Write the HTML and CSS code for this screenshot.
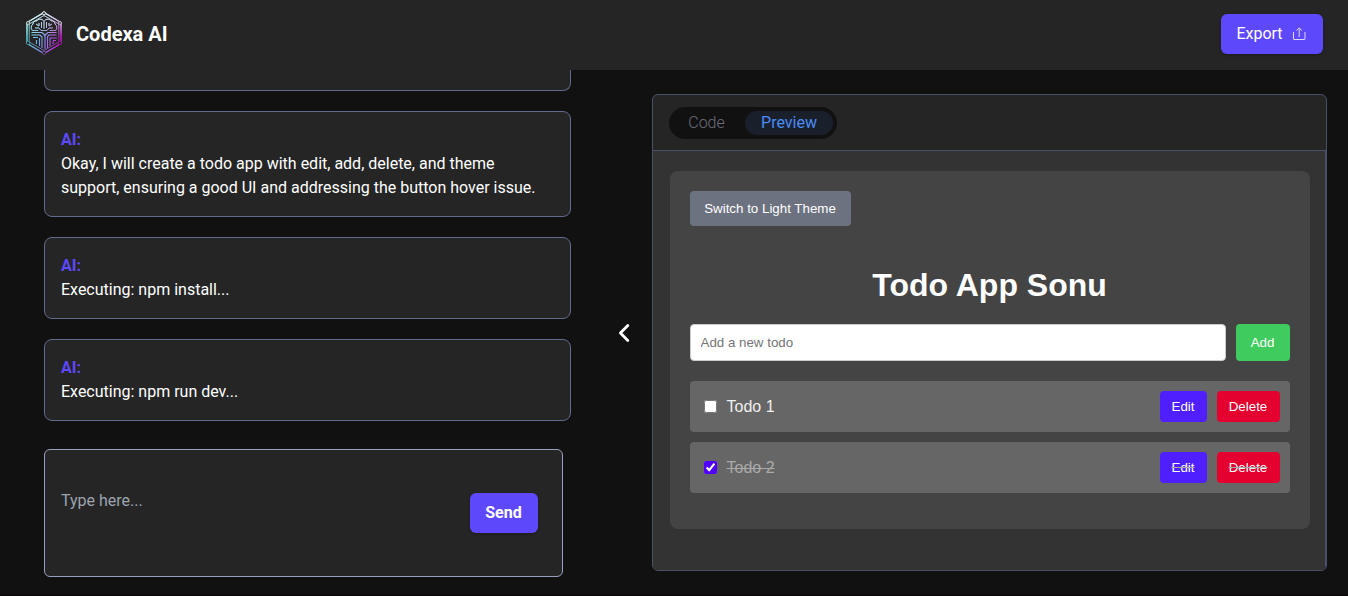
FILE: index.html
```
<!DOCTYPE html>
<html lang="en">
<head>
<meta charset="utf-8">
<title>Codexa AI</title>
<link rel="stylesheet" href="styles.css">
</head>
<body>
<header class="header">
  <div class="brand">
    <svg class="logo" viewBox="0 0 40 46" fill="none">
      <defs>
        <linearGradient id="side" x1="3" y1="22" x2="36" y2="32" gradientUnits="userSpaceOnUse">
          <stop offset="0" stop-color="#62eef0"/><stop offset=".5" stop-color="#7f9cec"/><stop offset="1" stop-color="#e010e6"/>
        </linearGradient>
        <linearGradient id="fade" x1="0" y1="2" x2="0" y2="27" gradientUnits="userSpaceOnUse">
          <stop offset="0" stop-color="#f4f4f4"/><stop offset=".45" stop-color="#e0e0e0" stop-opacity=".8"/><stop offset="1" stop-color="#ddd" stop-opacity="0"/>
        </linearGradient>
        <g id="mark">
          <path d="M20 2.500 37 12.500V33.500L20 43.500 3 33.500V12.500Z" stroke-width="1.300"/>
          <path d="M20 5.500 34.800 14V32L20 40.500 5.200 32V14Z" stroke-width=".7"/>
          <path d="M19 10c-2.500-1.500-5-.8-6 .8-2.500 0-4 1.500-4 3.200-2 1.500-2.500 4-.8 6.500h6M21 10c2.500-1.500 5-.8 6 .8 2.500 0 4 1.500 4 3.200 2 1.500 2.500 4 .8 6.500h-6M20 10v9M17.500 12v6M22.500 12v6M15 13v3l-3-2M25 13v3l3-2M11 18h4l2 2.500h6l2-2.500h4" stroke-width=".9"/>
          <path d="M7.500 22.500H18l3 2.500V39M7.500 25H16l2 2v11M9 27.500h5M32.500 22.500H24L20 26M32.500 25H25l-1.500 1.500V38M15.500 28v8M12.500 30v4M33 28h-7v8M29 31v3M32 30.500h-3" stroke-width="1.100"/>
          <g stroke-width=".9" fill="#252525"><circle cx="20" cy="3.200" r="1.500"/><circle cx="36" cy="13" r="1.400"/><circle cx="36" cy="33" r="1.400"/><circle cx="20" cy="43" r="1.500"/><circle cx="4" cy="33" r="1.400"/><circle cx="4" cy="13" r="1.400"/></g>
        </g>
      </defs>
      <use href="#mark" stroke="url(#side)"/>
      <use href="#mark" stroke="url(#fade)"/>
    </svg>
    <span class="brand-name">Codexa AI</span>
  </div>
  <button class="btn export">Export
    <svg class="export-icon" viewBox="0 0 14 14" fill="none" stroke="currentColor" stroke-width="1"><path d="M1.500 5v7a.5.500 0 0 0 .5.500h10.500a.5.500 0 0 0 .5-.5V5"/><path d="M7.200 10V1.500M4.500 3.500 7.200 1l2.700 2.500"/></svg>
  </button>
</header>
<main class="main">
  <section class="chat">
    <div class="messages">
      <div class="message cut"></div>
      <div class="message"><b class="who">AI:</b><p>Okay, I will create a todo app with edit, add, delete, and theme support, ensuring a good UI and addressing the button hover issue.</p></div>
      <div class="message"><b class="who">AI:</b><p>Executing: npm install...</p></div>
      <div class="message"><b class="who">AI:</b><p>Executing: npm run dev...</p></div>
    </div>
    <div class="composer">
      <span class="hint">Type here...</span>
      <button class="btn send">Send</button>
    </div>
  </section>
  <div class="divider">
    <svg class="chevron" viewBox="0 0 12 20" fill="none" stroke="#fff" stroke-width="2.800" stroke-linecap="round" stroke-linejoin="round"><path d="M9.800 2.600 2.400 10l7.400 7.400"/></svg>
  </div>
  <section class="workspace">
    <div class="tabbar">
      <div class="tabs"><span class="tab">Code</span><span class="tab active">Preview</span></div>
    </div>
    <div class="preview">
      <div class="app">
        <button class="app-btn theme">Switch to Light Theme</button>
        <h1 class="title">Todo App Sonu</h1>
        <div class="add-row">
          <input class="todo-input" type="text" placeholder="Add a new todo">
          <button class="app-btn add">Add</button>
        </div>
        <div class="todo"><input class="check" type="checkbox"><span class="label">Todo 1</span><button class="app-btn edit">Edit</button><button class="app-btn delete">Delete</button></div>
        <div class="todo done"><input class="check" type="checkbox" checked><span class="label">Todo 2</span><button class="app-btn edit">Edit</button><button class="app-btn delete">Delete</button></div>
      </div>
    </div>
  </section>
</main>
</body>
</html>
```
FILE: styles.css
```
* { box-sizing: border-box; }
body {
  margin: 0;
  height: 596px;
  overflow: hidden;
  display: flex;
  flex-direction: column;
  background: #111;
  border-bottom: 1px solid #080304;
  color: #fff;
  font: 16px/24px Roboto, sans-serif;
}
button { border: 0; margin: 0; color: #fff; }
p { margin: 0; }

.header {
  flex: none;
  height: 70px;
  padding: 0 25px 2px 24px;
  display: flex;
  align-items: center;
  justify-content: space-between;
  background: #252525;
}
.brand { display: flex; align-items: center; gap: 12px; }
.logo { width: 40px; height: 46px; margin-top: -2px; }
.brand-name { font-size: 20px; line-height: 28px; font-weight: 700; }
.btn {
  height: 40px;
  border-radius: 6px;
  background: #5e48fc;
  font: 16px/24px Roboto, sans-serif;
  box-shadow: 0 1px 3px rgba(0, 0, 0, .25);
}
.export {
  width: 102px;
  padding: 0 2px 0 0;
  display: flex;
  align-items: center;
  justify-content: center;
  gap: 9px;
}
.export-icon { width: 14px; height: 14px; opacity: .8; }

.main { flex: 1; min-height: 0; display: flex; }
.chat { width: 571px; padding-left: 44px; display: flex; flex-direction: column; }
.messages { display: flex; flex-direction: column; gap: 20px; }
.message {
  padding: 16px;
  border: 1px solid #636a8c;
  border-radius: 8px;
  background: #252525;
}
.message.cut { height: 21px; padding: 0; border-top: 0; border-radius: 0 0 8px 8px; }
.who { display: block; color: #5e48fc; font-weight: 700; }
.composer {
  width: 519px;
  height: 128px;
  margin-top: 28px;
  padding: 0 24px 0 16px;
  display: flex;
  align-items: center;
  justify-content: space-between;
  border: 1px solid #9a9fc2;
  border-radius: 6px;
  background: #252525;
}
.hint { color: #9ca3af; padding-bottom: 25px; }
.send { width: 68px; padding: 0 1px 0 0; font-weight: 700; }

.divider { width: 81px; padding-left: 47px; display: flex; align-items: center; }
.chevron { width: 12px; height: 20px; }

.workspace {
  width: 675px;
  height: 477px;
  margin-top: 24px;
  border: 1px solid #4a5068;
  border-radius: 6px;
  overflow: hidden;
  background: #252525;
  display: flex;
  flex-direction: column;
}
.tabbar { height: 56px; padding: 12px 16px; border-bottom: 1px solid #4a5068; }
.tabs {
  width: 168px;
  height: 32px;
  padding: 4px;
  display: flex;
  border-radius: 16px;
  background: #111;
}
.tab { width: 68px; padding: 0 1px 1px 0; margin-right: 4px; line-height: 23px; text-align: center; font-weight: 300; color: #6d6d7c; }
.tab.active { width: 88px; margin: 0; padding-right: 0; border-radius: 12px; background: #19202c; color: #4b8bf5; font-weight: 400; }

.preview {
  flex: 1;
  padding: 20px 16px 0 16.5px;
  background: #333;
  border-right: 1px solid #4a5068;
  font-family: "Liberation Sans", Arial, sans-serif;
}
.app { width: 640px; height: 358px; padding: 20px; border-radius: 8px; background: #444; }
.app-btn {
  padding: 0;
  border-radius: 4px;
  font: 13.333px/15px "Liberation Sans", Arial, sans-serif;
}
.theme { display: block; width: 161px; height: 35px; background: #6c727f; }
.title { margin: 41px 0 20px; font-size: 32px; line-height: 37px; font-weight: 700; text-align: center; }
.add-row { display: flex; gap: 10px; margin-bottom: 20px; }
.todo-input {
  flex: 1;
  height: 37px;
  padding: 0 10px;
  border: 1px solid #ccc;
  border-radius: 4px;
  background: #fff;
  font: 13.333px "Liberation Sans", Arial, sans-serif;
}
.todo-input::placeholder { color: #757575; }
.add { width: 54px; background: #3fcb5e; }
.todo {
  height: 51px;
  margin-bottom: 10px;
  padding: 0 10px 0 14px;
  display: flex;
  align-items: center;
  border-radius: 4px;
  background: #666;
}
.check { width: 13px; height: 13px; margin: 0 10px 0 0; accent-color: #4f00ff; }
.label { flex: 1; color: #f0f0f0; }
.edit { width: 47px; height: 31px; background: #4f1fff; }
.delete { width: 63px; height: 31px; margin-left: 10px; background: #e4002f; }
.done .label { color: #aaa; text-decoration: line-through; }
.done .app-btn { text-decoration: line-through #aaa; }
```
